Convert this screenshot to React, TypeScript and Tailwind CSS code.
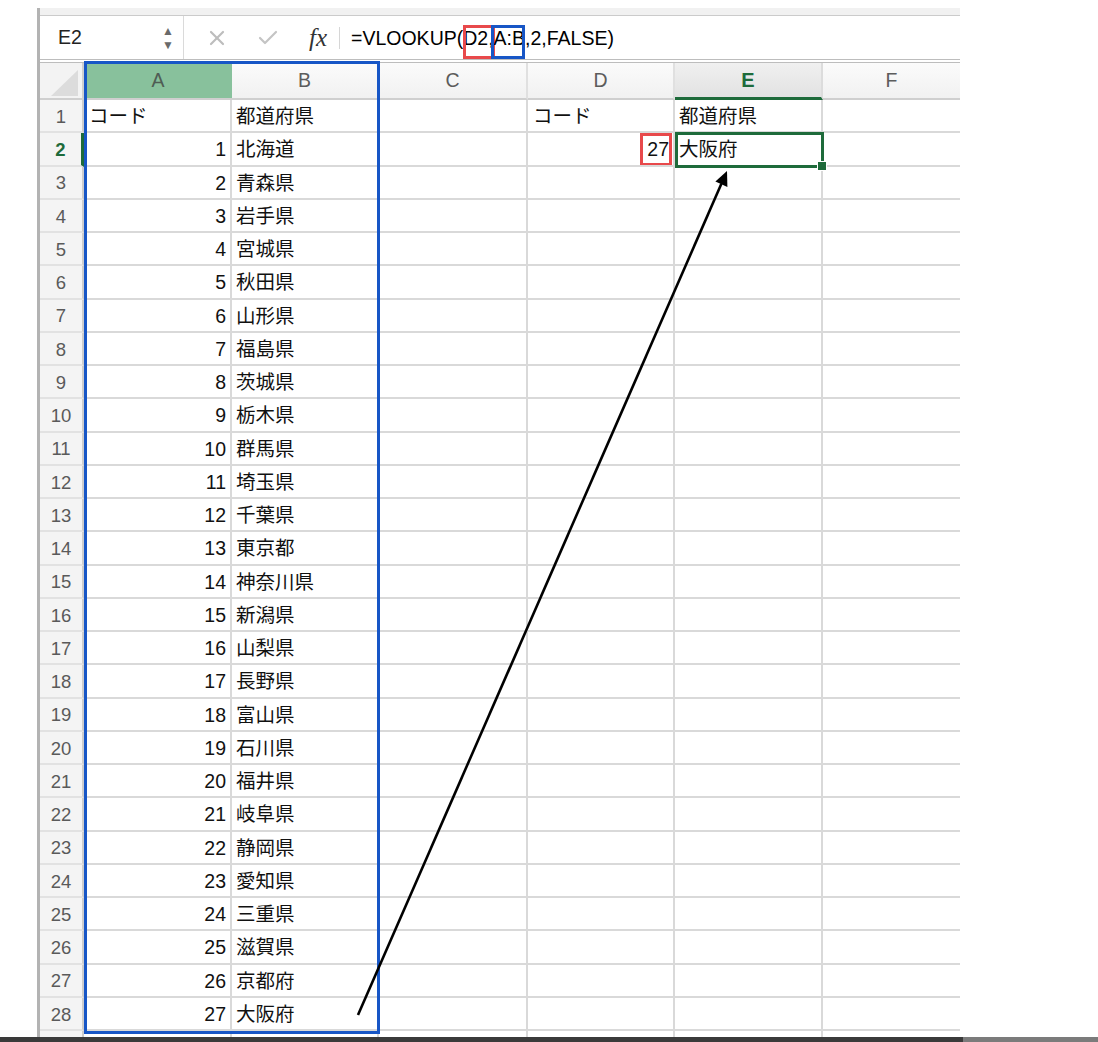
import { X, Check } from "lucide-react";

const PREFS = [
  "北海道", "青森県", "岩手県", "宮城県", "秋田県", "山形県", "福島県", "茨城県", "栃木県",
  "群馬県", "埼玉県", "千葉県", "東京都", "神奈川県", "新潟県", "山梨県", "長野県", "富山県",
  "石川県", "福井県", "岐阜県", "静岡県", "愛知県", "三重県", "滋賀県", "京都府", "大阪府",
];

const COLS = ["A", "B", "C", "D", "E", "F"];

const FONT = "font-['Liberation_Sans','Noto_Sans_CJK_JP',sans-serif]";

type Row = { a?: string; b?: string; d?: string; e?: string };

function buildRows(): Row[] {
  const rows: Row[] = [{ a: "コード", b: "都道府県", d: "コード", e: "都道府県" }];
  PREFS.forEach((p, i) => {
    const r: Row = { a: String(i + 1), b: p };
    if (i === 0) {
      r.d = "27";
      r.e = "大阪府";
    }
    rows.push(r);
  });
  rows.push({});
  return rows;
}

const base = "h-[33.25px] pt-[2px] border-r-2 border-b-2 border-[#d9d9d9] flex items-center text-[19.5px] text-[#111] whitespace-nowrap";
const cell = `${base} overflow-hidden`;

function FormulaBar() {
  return (
    <div className="flex h-[47px] shrink-0 items-center bg-white border-b-4 border-double border-[#bdbdbd]">
      <div className="flex h-full w-[144px] items-center justify-between border-r border-[#dadada] pl-[18px] pr-[9px]">
        <span className="text-[19.5px] text-[#222]">E2</span>
        <div className="flex flex-col items-center leading-none text-[#6a6a6a]">
          <span className="text-[12px]">▲</span>
          <span className="text-[12px] mt-[2px]">▼</span>
        </div>
      </div>
      <X className="ml-[21px]" size={24} strokeWidth={2.2} color="#bdbdbd" />
      <Check className="ml-[27px]" size={24} strokeWidth={2.2} color="#c4c4c4" />
      <span className="ml-[29px] font-['Liberation_Serif',serif] italic text-[25px] text-[#333] leading-none">fx</span>
      <div className="ml-[12px] h-[22px] w-px bg-[#d6d6d6]" />
      <div className="ml-[11px] text-[19.5px] text-black leading-[24px]">
        =VLOOKUP(
        <span className="relative">
          D2
          <span className="absolute left-0 -right-[7px] -top-[2px] -bottom-[10px] border-[3px] border-[#e8494b]" />
        </span>
        ,
        <span className="relative">
          A:B
          <span className="absolute -left-[3px] right-0 -top-[2px] -bottom-[10px] border-[3px] border-[#1756c6]" />
        </span>
        ,2,FALSE)
      </div>
    </div>
  );
}

function HeaderRow() {
  return (
    <>
      <div className="h-[37px] flex items-end justify-end border-r-2 border-b-2 border-[#cfcfcf] bg-[#f3f3f3] pr-[4px] pb-[2px]">
        <div className="h-[26px] w-[27px] bg-[#dcdcdc] [clip-path:polygon(100%_0,100%_100%,0_100%)]" />
      </div>
      {COLS.map((c) => {
        if (c === "A")
          return (
            <div key={c} className="h-[37px] flex items-center justify-center bg-[#88c19c] border-b-2 border-[#cfcfcf] text-[19.5px] text-[#4f5d54]">
              {c}
            </div>
          );
        if (c === "E")
          return (
            <div key={c} className="h-[37px] flex items-center justify-center bg-gradient-to-b from-[#f0f0f0] to-[#e2e2e2] border-r-2 border-[#dcdcdc] border-b-[3px] border-b-[#1e6b3b] text-[20px] font-bold text-[#1e6b3b]">
              {c}
            </div>
          );
        return (
          <div key={c} className={`h-[37px] flex items-center justify-center bg-gradient-to-b from-[#fbfbfb] to-[#f1f1f1] border-b-2 border-[#cfcfcf] text-[19.5px] text-[#5c5c5c] ${c === "F" ? "" : "border-r-2 border-r-[#e0e0e0]"}`}>
            {c}
          </div>
        );
      })}
    </>
  );
}

export default function App() {
  const rows = buildRows();
  return (
    <div className={`relative flex h-[1042px] w-[1098px] flex-col overflow-hidden bg-white ${FONT}`}>
      <div className="flex min-h-0 flex-1 flex-col overflow-hidden pt-[8px] pl-[37px]">
        <div className="flex min-h-0 w-[923px] flex-1 flex-col overflow-hidden border-l-[3px] border-[#b3b3b3]">
          <div className="h-[8px] shrink-0 bg-[#f1f1f1] border-b border-[#cbcbcb]" />
          <FormulaBar />
          <div className="grid shrink-0 grid-cols-[44px_148px_147px_149px_147px_148px_137px]">
            <HeaderRow />
            {rows.map((r, i) => {
              const n = i + 1;
              const active = n === 2;
              return (
                <div key={n} className="contents">
                  <div className={`h-[33.25px] pt-[2px] flex items-center justify-center bg-[#f4f4f4] border-b-2 border-[#e2e2e2] text-[18.5px] ${active ? "border-r-[3px] border-r-[#1e6b3b] font-bold text-[#1e6b3b] bg-[#ececec]" : "border-r-2 border-r-[#cdcdcd] text-[#5a5a5a]"}`}>
                    {n <= 28 ? n : ""}
                  </div>
                  <div className={`${cell} ${n === 1 ? "justify-start pl-[5px]" : "justify-end pr-[4px]"}`}>{r.a}</div>
                  <div className={`${cell} pl-[4px]`}>{r.b}</div>
                  <div className={cell} />
                  <div className={`${cell} relative ${n === 1 ? "justify-start pl-[5px]" : "justify-end pr-[4px]"}`}>
                    {r.d}
                    {active && <span className="absolute right-[1px] top-0 bottom-[-1px] w-[32px] border-[3px] border-[#e8494b]" />}
                  </div>
                  <div className={`${base} relative pl-[4px]`}>
                    {r.e}
                    {active && (
                      <>
                        <span className="absolute left-0 -right-[3px] -top-[1px] -bottom-[3px] border-[3px] border-[#1e6b3b]" />
                        <span className="absolute -right-[6px] -bottom-[6px] z-10 h-[10px] w-[10px] bg-[#1e6b3b] border border-white" />
                      </>
                    )}
                  </div>
                  <div className="h-[33.25px] border-b-2 border-[#d9d9d9]" />
                </div>
              );
            })}
          </div>
        </div>
      </div>
      <div className="flex h-[5px] shrink-0">
        <div className="w-[963px] bg-[#3a3a3a]" />
        <div className="flex-1 bg-[#7b7b7b]" />
      </div>

      {/* selection range A:B */}
      <div className="pointer-events-none absolute left-[84px] top-[61px] h-[973px] w-[296px] border-[3px] border-[#1756c6]" />

      {/* arrow */}
      <svg className="pointer-events-none absolute left-0 top-0" width="1098" height="1042">
        <line x1="358" y1="1015" x2="721.4" y2="183.8" stroke="#000" strokeWidth="2.6" />
        <polygon points="727,171 727.4,187 715.4,181.6" fill="#000" />
      </svg>
    </div>
  );
}
